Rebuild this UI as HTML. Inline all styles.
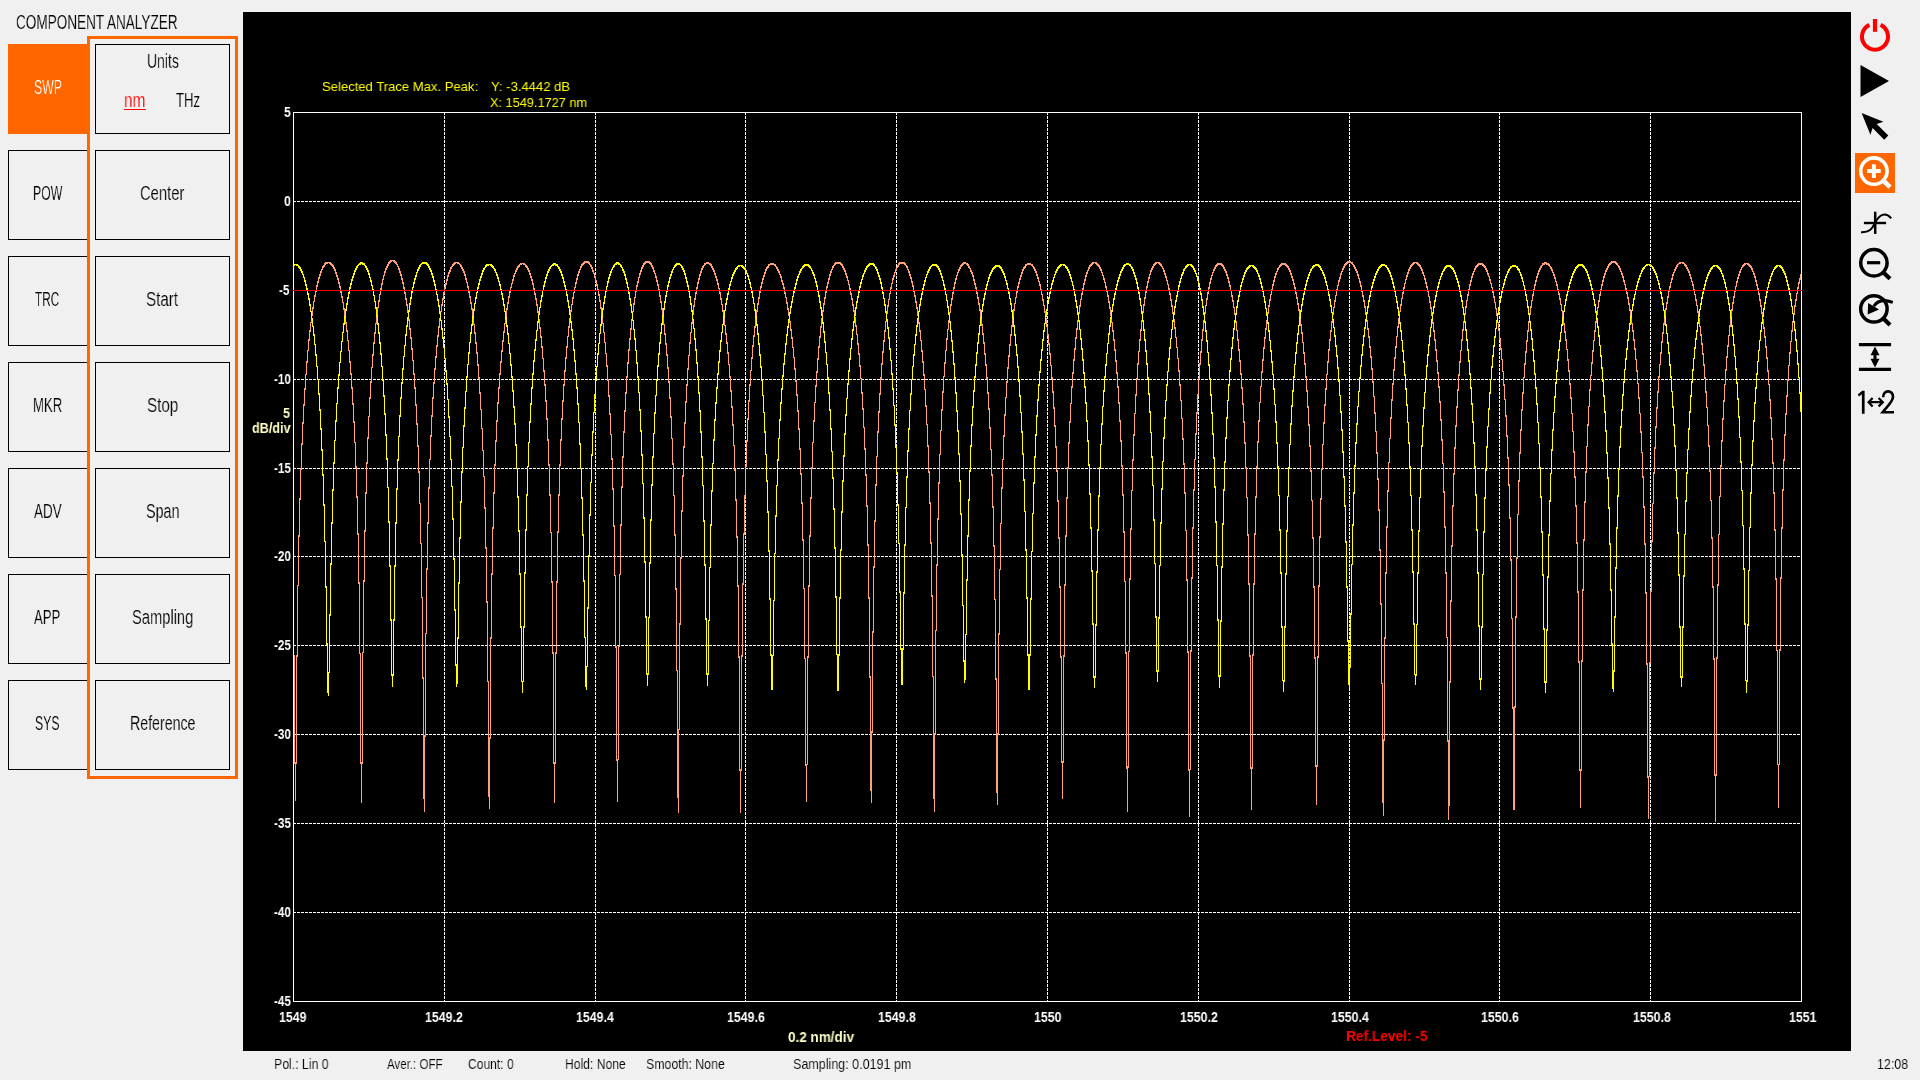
<!DOCTYPE html>
<html><head><meta charset="utf-8"><title>Component Analyzer</title>
<style>
html,body{margin:0;padding:0;}
body{width:1920px;height:1080px;background:#f0f0f0;position:relative;overflow:hidden;font-family:"Liberation Sans",sans-serif;}
.t{position:absolute;white-space:pre;transform-origin:0 0;display:block;will-change:transform;}
.b{position:absolute;box-sizing:border-box;border:1px solid #000;background:#f0f0f0;}
#frame{position:absolute;left:87px;top:36px;width:151px;height:743px;box-sizing:border-box;border:3px solid #ff6600;}
#chart{position:absolute;left:243px;top:12px;}
#icons{position:absolute;left:1851px;top:0;}
</style></head><body>

<span class="t" style="left:16.00px;top:8.74px;font-size:19.5px;line-height:26px;color:#000;transform:scaleX(0.6954);-webkit-text-stroke:0.15px #f0f0f0;">COMPONENT ANALYZER</span>
<div class="b" style="left:8px;top:44px;width:80px;height:90px;background:#ff6600;border-color:#ff6600"></div>
<div class="b" style="left:95px;top:44px;width:135px;height:90px"></div>
<div class="b" style="left:8px;top:150px;width:80px;height:90px"></div>
<div class="b" style="left:95px;top:150px;width:135px;height:90px"></div>
<div class="b" style="left:8px;top:256px;width:80px;height:90px"></div>
<div class="b" style="left:95px;top:256px;width:135px;height:90px"></div>
<div class="b" style="left:8px;top:362px;width:80px;height:90px"></div>
<div class="b" style="left:95px;top:362px;width:135px;height:90px"></div>
<div class="b" style="left:8px;top:468px;width:80px;height:90px"></div>
<div class="b" style="left:95px;top:468px;width:135px;height:90px"></div>
<div class="b" style="left:8px;top:574px;width:80px;height:90px"></div>
<div class="b" style="left:95px;top:574px;width:135px;height:90px"></div>
<div class="b" style="left:8px;top:680px;width:80px;height:90px"></div>
<div class="b" style="left:95px;top:680px;width:135px;height:90px"></div>
<span class="t" style="left:33.55px;top:74.24px;font-size:19.5px;line-height:26px;color:#fff;transform:scaleX(0.6281);-webkit-text-stroke:0.2px #ff6600;">SWP</span>
<span class="t" style="left:32.85px;top:180.24px;font-size:19.5px;line-height:26px;color:#000;transform:scaleX(0.6290);-webkit-text-stroke:0.15px #f0f0f0;">POW</span>
<span class="t" style="left:140.35px;top:180.24px;font-size:19.5px;line-height:26px;color:#000;transform:scaleX(0.7569);-webkit-text-stroke:0.15px #f0f0f0;">Center</span>
<span class="t" style="left:35.40px;top:286.24px;font-size:19.5px;line-height:26px;color:#000;transform:scaleX(0.6038);-webkit-text-stroke:0.15px #f0f0f0;">TRC</span>
<span class="t" style="left:145.80px;top:286.24px;font-size:19.5px;line-height:26px;color:#000;transform:scaleX(0.7770);-webkit-text-stroke:0.15px #f0f0f0;">Start</span>
<span class="t" style="left:32.90px;top:392.24px;font-size:19.5px;line-height:26px;color:#000;transform:scaleX(0.6738);-webkit-text-stroke:0.15px #f0f0f0;">MKR</span>
<span class="t" style="left:146.90px;top:392.24px;font-size:19.5px;line-height:26px;color:#000;transform:scaleX(0.7778);-webkit-text-stroke:0.15px #f0f0f0;">Stop</span>
<span class="t" style="left:33.65px;top:498.24px;font-size:19.5px;line-height:26px;color:#000;transform:scaleX(0.6908);-webkit-text-stroke:0.15px #f0f0f0;">ADV</span>
<span class="t" style="left:145.75px;top:498.24px;font-size:19.5px;line-height:26px;color:#000;transform:scaleX(0.7356);-webkit-text-stroke:0.15px #f0f0f0;">Span</span>
<span class="t" style="left:34.35px;top:604.24px;font-size:19.5px;line-height:26px;color:#000;transform:scaleX(0.6740);-webkit-text-stroke:0.15px #f0f0f0;">APP</span>
<span class="t" style="left:131.85px;top:604.24px;font-size:19.5px;line-height:26px;color:#000;transform:scaleX(0.7540);-webkit-text-stroke:0.15px #f0f0f0;">Sampling</span>
<span class="t" style="left:35.25px;top:710.24px;font-size:19.5px;line-height:26px;color:#000;transform:scaleX(0.6279);-webkit-text-stroke:0.15px #f0f0f0;">SYS</span>
<span class="t" style="left:129.75px;top:710.24px;font-size:19.5px;line-height:26px;color:#000;transform:scaleX(0.7280);-webkit-text-stroke:0.15px #f0f0f0;">Reference</span>
<span class="t" style="left:147.00px;top:47.64px;font-size:19.5px;line-height:26px;color:#000;transform:scaleX(0.7158);-webkit-text-stroke:0.15px #f0f0f0;">Units</span>
<span class="t" style="left:124.00px;top:87.04px;font-size:19.5px;line-height:26px;color:#ff0000;transform:scaleX(0.7937);-webkit-text-stroke:0.15px #f0f0f0;">nm</span>
<div style="position:absolute;left:124px;top:109px;width:22px;height:1px;background:#ff0000"></div>
<span class="t" style="left:176.00px;top:86.84px;font-size:19.5px;line-height:26px;color:#000;transform:scaleX(0.6714);-webkit-text-stroke:0.15px #f0f0f0;">THz</span>
<div id="frame"></div>
<span class="t" style="left:274.30px;top:1053.73px;font-size:15.2px;line-height:20px;color:#000;transform:scaleX(0.8092);-webkit-text-stroke:0.12px #f0f0f0;">Pol.: Lin 0</span>
<span class="t" style="left:386.80px;top:1053.73px;font-size:15.2px;line-height:20px;color:#000;transform:scaleX(0.7609);-webkit-text-stroke:0.12px #f0f0f0;">Aver.: OFF</span>
<span class="t" style="left:468.00px;top:1053.73px;font-size:15.2px;line-height:20px;color:#000;transform:scaleX(0.7953);-webkit-text-stroke:0.12px #f0f0f0;">Count: 0</span>
<span class="t" style="left:564.70px;top:1053.73px;font-size:15.2px;line-height:20px;color:#000;transform:scaleX(0.7995);-webkit-text-stroke:0.12px #f0f0f0;">Hold: None</span>
<span class="t" style="left:646.00px;top:1053.73px;font-size:15.2px;line-height:20px;color:#000;transform:scaleX(0.8110);-webkit-text-stroke:0.12px #f0f0f0;">Smooth: None</span>
<span class="t" style="left:793.00px;top:1053.73px;font-size:15.2px;line-height:20px;color:#000;transform:scaleX(0.8249);-webkit-text-stroke:0.12px #f0f0f0;">Sampling: 0.0191 pm</span>
<span class="t" style="left:1876.80px;top:1053.73px;font-size:15.2px;line-height:20px;color:#000;transform:scaleX(0.8202);-webkit-text-stroke:0.12px #f0f0f0;">12:08</span>
<svg id="chart" width="1608" height="1039" viewBox="243 12 1608 1039" shape-rendering="crispEdges">
<rect x="243" y="12" width="1608" height="1039" fill="#000"/>
<path d="M293 201.5H1802M293 290.5H1802M293 379.5H1802M293 468.5H1802M293 556.5H1802M293 645.5H1802M293 734.5H1802M293 823.5H1802M293 912.5H1802" stroke="#fff" stroke-width="1" stroke-dasharray="3 1" fill="none"/>
<path d="M444.5 112V1002M595.5 112V1002M745.5 112V1002M896.5 112V1002M1047.5 112V1002M1198.5 112V1002M1349.5 112V1002M1499.5 112V1002M1650.5 112V1002" stroke="#fff" stroke-width="1" stroke-dasharray="3 1" fill="none"/>
<path d="M294.5 655V764M295.5 762V801M296.5 655V764M297.5 585V657M298.5 535V586M299.5 498V537M300.5 468V500M301.5 443V470M302.5 422V445M303.5 404V424M304.5 388V406M305.5 374V390M306.5 361V375M307.5 350V363M308.5 339V351M309.5 330V341M310.5 322V332M311.5 314V323M312.5 307V316M313.5 301V309M314.5 295V302M315.5 290V297M316.5 285V292M317.5 281V287M318.5 277V283M319.5 274V279M320.5 271V276M321.5 269V273M322.5 266V270M323.5 265V268M324.5 263V267M325.5 262V265M326.5 262V264M327.5 262V264M328.5 262V263M329.5 262V264M330.5 262V265M331.5 263V266M332.5 264V267M333.5 265V269M334.5 267V271M335.5 269V274M336.5 272V277M337.5 275V280M338.5 278V284M339.5 282V288M340.5 286V293M341.5 291V298M342.5 296V303M343.5 302V310M344.5 308V316M345.5 315V324M346.5 322V332M347.5 330V341M348.5 340V351M349.5 350V363M350.5 361V375M351.5 373V389M352.5 387V405M353.5 403V423M354.5 421V443M355.5 442V468M356.5 466V498M357.5 496V535M358.5 533V584M359.5 582V654M360.5 653V764M361.5 762V803M362.5 652V764M363.5 580V653M364.5 530V582M365.5 492V532M366.5 462V494M367.5 437V464M368.5 416V439M369.5 397V417M370.5 381V399M371.5 367V383M372.5 354V368M373.5 342V356M374.5 332V344M375.5 323V334M376.5 314V324M377.5 307V316M378.5 300V308M379.5 294V302M380.5 288V295M381.5 283V290M382.5 279V285M383.5 275V280M384.5 271V276M385.5 268V273M386.5 266V270M387.5 264V268M388.5 262V266M389.5 261V264M390.5 260V263M391.5 260V262M392.5 260V261M393.5 260V262M394.5 260V263M395.5 261V264M396.5 262V265M397.5 264V267M398.5 266V270M399.5 268V273M400.5 271V276M401.5 274V280M402.5 278V284M403.5 282V289M404.5 287V294M405.5 292V300M406.5 298V306M407.5 304V313M408.5 311V321M409.5 319V330M410.5 328V339M411.5 337V350M412.5 348V361M413.5 360V375M414.5 373V389M415.5 387V406M416.5 404V425M417.5 423V447M418.5 445V473M419.5 471V504M420.5 503V544M421.5 543V598M422.5 597V679M423.5 677V799M424.5 735V812M425.5 633V737M426.5 568V634M427.5 522V570M428.5 487V524M429.5 459V489M430.5 435V460M431.5 415V437M432.5 397V417M433.5 382V399M434.5 368V384M435.5 356V370M436.5 345V358M437.5 335V347M438.5 326V337M439.5 318V328M440.5 311V320M441.5 304V312M442.5 298V306M443.5 292V300M444.5 287V294M445.5 283V289M446.5 279V285M447.5 275V281M448.5 272V277M449.5 270V274M450.5 267V272M451.5 266V269M452.5 264V267M453.5 263V266M454.5 262V265M455.5 262V264M456.5 262V263M457.5 262V264M458.5 262V264M459.5 263V265M460.5 264V267M461.5 265V269M462.5 267V271M463.5 269V273M464.5 271V276M465.5 274V280M466.5 278V283M467.5 282V288M468.5 286V293M469.5 291V298M470.5 296V304M471.5 302V310M472.5 308V317M473.5 316V325M474.5 324V334M475.5 332V344M476.5 342V354M477.5 352V366M478.5 364V379M479.5 377V394M480.5 392V410M481.5 409V429M482.5 428V451M483.5 450V477M484.5 476V509M485.5 507V549M486.5 547V603M487.5 601V682M488.5 681V797M489.5 737V809M490.5 637V739M491.5 573V639M492.5 527V575M493.5 492V529M494.5 464V494M495.5 440V466M496.5 420V442M497.5 402V422M498.5 387V404M499.5 373V389M500.5 361V375M501.5 350V363M502.5 340V352M503.5 331V342M504.5 323V333M505.5 315V324M506.5 308V317M507.5 302V310M508.5 296V304M509.5 291V298M510.5 287V293M511.5 283V288M512.5 279V284M513.5 275V281M514.5 273V277M515.5 270V274M516.5 268V272M517.5 266V270M518.5 265V268M519.5 264V267M520.5 263V265M521.5 263V265M522.5 263V264M523.5 263V265M524.5 263V265M525.5 264V267M526.5 265V268M527.5 266V270M528.5 268V272M529.5 270V275M530.5 273V278M531.5 276V281M532.5 279V285M533.5 283V290M534.5 288V295M535.5 293V300M536.5 298V306M537.5 304V313M538.5 311V321M539.5 319V329M540.5 327V338M541.5 336V348M542.5 346V359M543.5 358V372M544.5 370V386M545.5 384V402M546.5 400V420M547.5 418V441M548.5 439V466M549.5 464V496M550.5 494V533M551.5 532V583M552.5 581V654M553.5 652V764M554.5 762V803M555.5 652V764M556.5 581V654M557.5 531V583M558.5 494V533M559.5 464V496M560.5 439V466M561.5 418V441M562.5 400V420M563.5 384V402M564.5 370V386M565.5 357V372M566.5 346V359M567.5 336V348M568.5 326V337M569.5 318V328M570.5 310V320M571.5 304V312M572.5 297V305M573.5 292V299M574.5 287V293M575.5 282V288M576.5 278V284M577.5 274V280M578.5 271V276M579.5 269V273M580.5 266V270M581.5 264V268M582.5 263V266M583.5 262V265M584.5 261V264M585.5 261V263M586.5 261V263M587.5 261V263M588.5 261V264M589.5 262V265M590.5 264V267M591.5 265V269M592.5 267V272M593.5 270V274M594.5 273V278M595.5 276V282M596.5 280V286M597.5 284V291M598.5 289V296M599.5 294V302M600.5 300V309M601.5 307V316M602.5 314V324M603.5 323V333M604.5 332V343M605.5 342V354M606.5 353V367M607.5 365V381M608.5 379V397M609.5 395V415M610.5 413V435M611.5 434V460M612.5 458V490M613.5 488V527M614.5 525V576M615.5 575V648M616.5 646V761M617.5 759V802M618.5 646V760M619.5 574V647M620.5 524V575M621.5 486V526M622.5 456V488M623.5 431V458M624.5 410V433M625.5 392V412M626.5 376V394M627.5 362V378M628.5 349V364M629.5 338V351M630.5 328V340M631.5 319V330M632.5 311V321M633.5 303V312M634.5 297V305M635.5 291V298M636.5 285V292M637.5 281V287M638.5 277V283M639.5 273V278M640.5 270V275M641.5 267V272M642.5 265V269M643.5 263V267M644.5 262V265M645.5 261V264M646.5 261V263M647.5 261V263M648.5 261V263M649.5 261V264M650.5 262V265M651.5 263V267M652.5 265V269M653.5 267V272M654.5 270V274M655.5 273V278M656.5 276V282M657.5 280V286M658.5 284V291M659.5 289V297M660.5 295V303M661.5 301V310M662.5 308V317M663.5 315V325M664.5 324V335M665.5 333V345M666.5 343V356M667.5 354V369M668.5 367V383M669.5 381V399M670.5 397V418M671.5 416V439M672.5 438V465M673.5 463V496M674.5 495V536M675.5 534V590M676.5 588V671M677.5 670V798M678.5 729V813M679.5 623V730M680.5 557V625M681.5 510V559M682.5 475V512M683.5 446V477M684.5 422V448M685.5 401V424M686.5 384V403M687.5 368V386M688.5 355V370M689.5 342V356M690.5 332V344M691.5 322V333M692.5 313V324M693.5 305V315M694.5 298V307M695.5 292V300M696.5 287V294M697.5 282V289M698.5 278V284M699.5 274V280M700.5 271V276M701.5 268V273M702.5 266V270M703.5 265V268M704.5 263V266M705.5 263V265M706.5 262V264M707.5 262V264M708.5 262V264M709.5 263V265M710.5 263V266M711.5 264V268M712.5 266V270M713.5 268V272M714.5 270V275M715.5 273V278M716.5 276V281M717.5 279V285M718.5 283V289M719.5 288V294M720.5 292V300M721.5 298V305M722.5 304V312M723.5 310V319M724.5 317V326M725.5 325V335M726.5 333V344M727.5 342V354M728.5 352V365M729.5 364V378M730.5 376V392M731.5 390V408M732.5 406V426M733.5 424V446M734.5 445V471M735.5 469V501M736.5 499V538M737.5 536V587M738.5 585V658M739.5 656V771M740.5 769V813M741.5 655V771M742.5 583V657M743.5 533V585M744.5 495V535M745.5 465V497M746.5 440V467M747.5 418V442M748.5 400V420M749.5 384V402M750.5 370V386M751.5 357V371M752.5 345V359M753.5 335V347M754.5 326V337M755.5 317V328M756.5 310V319M757.5 303V312M758.5 297V305M759.5 291V299M760.5 286V293M761.5 282V288M762.5 278V284M763.5 275V280M764.5 272V277M765.5 269V274M766.5 267V271M767.5 266V269M768.5 264V268M769.5 264V266M770.5 263V265M771.5 263V265M772.5 263V265M773.5 263V265M774.5 264V266M775.5 264V267M776.5 266V269M777.5 267V271M778.5 269V273M779.5 271V275M780.5 274V278M781.5 276V282M782.5 280V285M783.5 283V289M784.5 287V294M785.5 292V298M786.5 297V304M787.5 302V310M788.5 308V316M789.5 314V323M790.5 321V331M791.5 329V339M792.5 337V348M793.5 347V358M794.5 357V370M795.5 368V382M796.5 380V396M797.5 394V412M798.5 410V430M799.5 428V450M800.5 448V475M801.5 473V504M802.5 502V541M803.5 539V589M804.5 588V659M805.5 658V766M806.5 764V802M807.5 656V765M808.5 585V658M809.5 535V587M810.5 497V537M811.5 467V499M812.5 442V469M813.5 420V443M814.5 402V422M815.5 385V403M816.5 371V387M817.5 358V373M818.5 346V360M819.5 336V348M820.5 326V338M821.5 318V328M822.5 310V320M823.5 303V312M824.5 297V305M825.5 291V299M826.5 286V293M827.5 282V288M828.5 278V284M829.5 274V280M830.5 271V276M831.5 269V273M832.5 266V270M833.5 265V268M834.5 263V266M835.5 262V265M836.5 262V264M837.5 262V264M838.5 262V264M839.5 262V264M840.5 262V265M841.5 263V266M842.5 264V268M843.5 266V270M844.5 268V272M845.5 270V275M846.5 273V278M847.5 276V281M848.5 280V285M849.5 284V290M850.5 288V295M851.5 293V300M852.5 298V306M853.5 304V312M854.5 310V319M855.5 317V327M856.5 325V335M857.5 334V345M858.5 343V355M859.5 353V367M860.5 365V379M861.5 378V394M862.5 392V410M863.5 408V428M864.5 427V450M865.5 448V476M866.5 474V507M867.5 505V546M868.5 544V599M869.5 597V678M870.5 676V791M871.5 731V803M872.5 631V733M873.5 566V633M874.5 520V568M875.5 484V522M876.5 456V486M877.5 431V457M878.5 411V433M879.5 393V413M880.5 377V395M881.5 363V379M882.5 351V365M883.5 340V353M884.5 330V342M885.5 321V332M886.5 313V322M887.5 305V314M888.5 299V307M889.5 293V300M890.5 287V294M891.5 283V289M892.5 278V284M893.5 275V280M894.5 272V277M895.5 269V273M896.5 267V271M897.5 265V268M898.5 263V267M899.5 262V265M900.5 262V264M901.5 262V264M902.5 262V264M903.5 262V264M904.5 262V265M905.5 263V266M906.5 265V268M907.5 266V270M908.5 269V273M909.5 271V276M910.5 274V279M911.5 277V283M912.5 281V287M913.5 285V292M914.5 290V297M915.5 295V303M916.5 301V309M917.5 307V316M918.5 314V324M919.5 322V332M920.5 330V341M921.5 340V352M922.5 350V363M923.5 361V376M924.5 374V390M925.5 389V407M926.5 405V425M927.5 424V447M928.5 445V473M929.5 471V504M930.5 502V544M931.5 542V597M932.5 595V677M933.5 676V799M934.5 733V812M935.5 630V735M936.5 564V631M937.5 518V566M938.5 482V520M939.5 454V484M940.5 430V455M941.5 409V431M942.5 391V411M943.5 376V393M944.5 362V377M945.5 350V364M946.5 338V351M947.5 329V340M948.5 320V330M949.5 312V321M950.5 304V313M951.5 298V306M952.5 292V300M953.5 287V294M954.5 282V289M955.5 278V284M956.5 275V280M957.5 272V276M958.5 269V273M959.5 267V271M960.5 265V269M961.5 264V267M962.5 263V266M963.5 262V265M964.5 262V264M965.5 262V264M966.5 263V265M967.5 263V266M968.5 264V268M969.5 266V269M970.5 268V272M971.5 270V274M972.5 272V277M973.5 275V281M974.5 279V285M975.5 283V289M976.5 287V294M977.5 292V299M978.5 297V305M979.5 303V311M980.5 309V318M981.5 317V326M982.5 324V335M983.5 333V344M984.5 342V355M985.5 353V366M986.5 364V379M987.5 377V394M988.5 392V410M989.5 408V429M990.5 427V450M991.5 449V476M992.5 474V508M993.5 506V547M994.5 545V600M995.5 599V680M996.5 678V793M997.5 733V805M998.5 633V735M999.5 569V635M1000.5 523V570M1001.5 487V524M1002.5 459V489M1003.5 435V460M1004.5 414V437M1005.5 397V416M1006.5 381V398M1007.5 367V383M1008.5 355V369M1009.5 344V357M1010.5 334V346M1011.5 325V336M1012.5 317V327M1013.5 309V318M1014.5 303V311M1015.5 297V304M1016.5 291V298M1017.5 286V293M1018.5 282V288M1019.5 278V284M1020.5 275V280M1021.5 272V277M1022.5 269V274M1023.5 267V271M1024.5 266V269M1025.5 264V268M1026.5 264V266M1027.5 263V265M1028.5 263V265M1029.5 263V265M1030.5 263V265M1031.5 264V266M1032.5 264V267M1033.5 266V269M1034.5 267V271M1035.5 269V273M1036.5 271V276M1037.5 274V279M1038.5 277V282M1039.5 281V286M1040.5 284V291M1041.5 289V295M1042.5 294V301M1043.5 299V306M1044.5 305V313M1045.5 311V320M1046.5 318V327M1047.5 326V336M1048.5 334V345M1049.5 343V355M1050.5 353V366M1051.5 365V379M1052.5 377V393M1053.5 391V409M1054.5 407V427M1055.5 425V448M1056.5 446V472M1057.5 470V502M1058.5 500V539M1059.5 537V588M1060.5 586V658M1061.5 656V763M1062.5 761V799M1063.5 655V763M1064.5 584V657M1065.5 535V586M1066.5 497V537M1067.5 467V499M1068.5 442V469M1069.5 421V444M1070.5 403V423M1071.5 386V404M1072.5 372V388M1073.5 359V374M1074.5 348V361M1075.5 337V350M1076.5 328V339M1077.5 320V330M1078.5 312V321M1079.5 305V314M1080.5 299V307M1081.5 293V300M1082.5 288V295M1083.5 283V290M1084.5 279V285M1085.5 275V281M1086.5 272V277M1087.5 270V274M1088.5 267V271M1089.5 265V269M1090.5 264V267M1091.5 263V266M1092.5 262V265M1093.5 262V264M1094.5 262V263M1095.5 262V264M1096.5 262V265M1097.5 263V266M1098.5 264V267M1099.5 265V269M1100.5 267V271M1101.5 269V273M1102.5 272V276M1103.5 275V280M1104.5 278V283M1105.5 282V288M1106.5 286V292M1107.5 290V297M1108.5 295V303M1109.5 301V309M1110.5 307V316M1111.5 314V323M1112.5 322V332M1113.5 330V341M1114.5 339V351M1115.5 349V362M1116.5 360V374M1117.5 372V388M1118.5 386V404M1119.5 402V422M1120.5 420V442M1121.5 440V467M1122.5 465V496M1123.5 494V533M1124.5 531V582M1125.5 581V654M1126.5 652V769M1127.5 766V812M1128.5 651V768M1129.5 578V652M1130.5 528V580M1131.5 490V530M1132.5 459V491M1133.5 434V461M1134.5 413V436M1135.5 394V414M1136.5 378V396M1137.5 363V380M1138.5 351V365M1139.5 339V352M1140.5 329V341M1141.5 320V331M1142.5 311V322M1143.5 304V313M1144.5 297V306M1145.5 291V299M1146.5 286V293M1147.5 281V288M1148.5 277V283M1149.5 274V279M1150.5 270V275M1151.5 268V272M1152.5 266V270M1153.5 264V268M1154.5 263V266M1155.5 262V265M1156.5 262V264M1157.5 262V263M1158.5 262V264M1159.5 262V265M1160.5 263V266M1161.5 264V267M1162.5 266V269M1163.5 268V272M1164.5 270V275M1165.5 273V278M1166.5 276V281M1167.5 280V285M1168.5 284V290M1169.5 288V295M1170.5 293V301M1171.5 299V307M1172.5 305V314M1173.5 312V321M1174.5 319V329M1175.5 327V338M1176.5 337V348M1177.5 347V359M1178.5 358V372M1179.5 370V386M1180.5 384V401M1181.5 400V419M1182.5 418V440M1183.5 438V465M1184.5 463V494M1185.5 492V531M1186.5 530V581M1187.5 579V653M1188.5 651V771M1189.5 769V817M1190.5 650V770M1191.5 577V652M1192.5 527V579M1193.5 489V529M1194.5 459V491M1195.5 433V460M1196.5 412V435M1197.5 394V414M1198.5 378V396M1199.5 363V379M1200.5 351V365M1201.5 339V353M1202.5 329V341M1203.5 320V331M1204.5 312V322M1205.5 305V314M1206.5 298V306M1207.5 292V300M1208.5 287V294M1209.5 282V289M1210.5 278V284M1211.5 275V280M1212.5 272V276M1213.5 269V273M1214.5 267V271M1215.5 265V269M1216.5 264V267M1217.5 263V266M1218.5 263V265M1219.5 263V265M1220.5 263V265M1221.5 263V266M1222.5 264V267M1223.5 265V269M1224.5 267V271M1225.5 269V273M1226.5 271V276M1227.5 274V279M1228.5 277V283M1229.5 281V287M1230.5 285V291M1231.5 290V297M1232.5 295V302M1233.5 300V308M1234.5 307V315M1235.5 314V323M1236.5 321V331M1237.5 330V341M1238.5 339V351M1239.5 349V362M1240.5 360V375M1241.5 373V389M1242.5 387V405M1243.5 403V423M1244.5 421V444M1245.5 442V469M1246.5 467V498M1247.5 497V536M1248.5 534V585M1249.5 583V657M1250.5 655V769M1251.5 767V810M1252.5 654V769M1253.5 583V656M1254.5 533V585M1255.5 496V535M1256.5 466V498M1257.5 441V468M1258.5 420V443M1259.5 402V422M1260.5 386V403M1261.5 371V387M1262.5 359V373M1263.5 347V361M1264.5 337V349M1265.5 328V339M1266.5 320V330M1267.5 312V322M1268.5 305V314M1269.5 299V307M1270.5 294V301M1271.5 289V295M1272.5 284V290M1273.5 280V286M1274.5 276V282M1275.5 273V278M1276.5 271V275M1277.5 268V272M1278.5 267V270M1279.5 265V268M1280.5 264V267M1281.5 263V266M1282.5 263V265M1283.5 263V265M1284.5 263V265M1285.5 263V266M1286.5 264V267M1287.5 265V268M1288.5 266V270M1289.5 268V272M1290.5 270V275M1291.5 273V278M1292.5 276V281M1293.5 279V285M1294.5 283V289M1295.5 287V294M1296.5 292V299M1297.5 297V305M1298.5 303V311M1299.5 309V318M1300.5 316V326M1301.5 324V334M1302.5 332V343M1303.5 342V354M1304.5 352V365M1305.5 363V378M1306.5 376V392M1307.5 390V408M1308.5 406V426M1309.5 424V447M1310.5 445V472M1311.5 470V501M1312.5 500V539M1313.5 537V588M1314.5 586V659M1315.5 657V767M1316.5 765V805M1317.5 656V767M1318.5 585V658M1319.5 536V587M1320.5 498V538M1321.5 468V500M1322.5 444V470M1323.5 422V445M1324.5 404V424M1325.5 388V406M1326.5 374V390M1327.5 361V375M1328.5 349V363M1329.5 339V351M1330.5 330V341M1331.5 321V332M1332.5 314V323M1333.5 307V315M1334.5 300V308M1335.5 295V302M1336.5 289V296M1337.5 285V291M1338.5 280V286M1339.5 277V282M1340.5 273V279M1341.5 271V275M1342.5 268V272M1343.5 266V270M1344.5 264V268M1345.5 263V266M1346.5 262V265M1347.5 261V264M1348.5 261V263M1349.5 261V263M1350.5 261V263M1351.5 262V264M1352.5 262V265M1353.5 264V267M1354.5 265V269M1355.5 267V271M1356.5 269V273M1357.5 271V276M1358.5 274V279M1359.5 278V283M1360.5 281V287M1361.5 285V292M1362.5 290V297M1363.5 295V302M1364.5 300V308M1365.5 306V315M1366.5 313V322M1367.5 320V330M1368.5 328V338M1369.5 336V348M1370.5 346V358M1371.5 356V370M1372.5 368V383M1373.5 381V397M1374.5 396V414M1375.5 412V432M1376.5 431V454M1377.5 452V480M1378.5 478V511M1379.5 509V551M1380.5 549V605M1381.5 603V684M1382.5 683V803M1383.5 739V816M1384.5 637V741M1385.5 572V639M1386.5 526V574M1387.5 490V528M1388.5 462V492M1389.5 438V463M1390.5 417V439M1391.5 399V419M1392.5 383V401M1393.5 369V385M1394.5 357V371M1395.5 346V359M1396.5 336V348M1397.5 326V337M1398.5 318V328M1399.5 311V320M1400.5 304V312M1401.5 298V306M1402.5 292V299M1403.5 287V294M1404.5 283V289M1405.5 279V284M1406.5 275V280M1407.5 272V277M1408.5 269V274M1409.5 267V271M1410.5 265V269M1411.5 264V267M1412.5 263V266M1413.5 262V265M1414.5 262V264M1415.5 262V263M1416.5 262V264M1417.5 262V265M1418.5 263V266M1419.5 264V267M1420.5 265V269M1421.5 267V271M1422.5 269V274M1423.5 272V276M1424.5 275V280M1425.5 278V284M1426.5 282V288M1427.5 286V292M1428.5 291V297M1429.5 296V303M1430.5 301V309M1431.5 307V316M1432.5 314V324M1433.5 322V332M1434.5 330V341M1435.5 339V351M1436.5 349V362M1437.5 360V374M1438.5 372V388M1439.5 386V403M1440.5 401V421M1441.5 419V441M1442.5 439V464M1443.5 463V493M1444.5 491V528M1445.5 526V574M1446.5 572V638M1447.5 637V742M1448.5 740V820M1449.5 681V806M1450.5 600V683M1451.5 545V602M1452.5 505V547M1453.5 473V507M1454.5 447V475M1455.5 425V449M1456.5 406V427M1457.5 389V408M1458.5 374V391M1459.5 361V376M1460.5 350V363M1461.5 339V351M1462.5 329V341M1463.5 321V331M1464.5 313V323M1465.5 306V315M1466.5 300V308M1467.5 294V301M1468.5 289V296M1469.5 284V291M1470.5 280V286M1471.5 276V282M1472.5 273V278M1473.5 271V275M1474.5 268V272M1475.5 266V270M1476.5 265V268M1477.5 264V267M1478.5 263V266M1479.5 263V265M1480.5 263V265M1481.5 263V265M1482.5 263V266M1483.5 264V267M1484.5 265V268M1485.5 266V270M1486.5 268V272M1487.5 270V275M1488.5 273V277M1489.5 276V281M1490.5 279V284M1491.5 283V288M1492.5 287V293M1493.5 291V298M1494.5 296V303M1495.5 302V309M1496.5 308V316M1497.5 314V323M1498.5 322V331M1499.5 330V340M1500.5 338V350M1501.5 348V360M1502.5 359V372M1503.5 371V386M1504.5 384V400M1505.5 399V417M1506.5 415V437M1507.5 435V459M1508.5 457V486M1509.5 484V519M1510.5 517V561M1511.5 559V619M1512.5 618V709M1513.5 707V810M1514.5 706V810M1515.5 616V708M1516.5 557V618M1517.5 514V559M1518.5 480V515M1519.5 452V482M1520.5 429V454M1521.5 409V431M1522.5 392V411M1523.5 377V394M1524.5 363V378M1525.5 351V365M1526.5 340V353M1527.5 330V342M1528.5 321V332M1529.5 313V323M1530.5 306V315M1531.5 300V308M1532.5 294V301M1533.5 289V296M1534.5 284V290M1535.5 280V286M1536.5 276V282M1537.5 273V278M1538.5 270V275M1539.5 268V272M1540.5 266V270M1541.5 265V268M1542.5 263V266M1543.5 263V265M1544.5 262V265M1545.5 262V264M1546.5 262V265M1547.5 263V265M1548.5 263V266M1549.5 264V267M1550.5 266V269M1551.5 267V271M1552.5 269V273M1553.5 272V276M1554.5 274V279M1555.5 277V282M1556.5 281V286M1557.5 284V290M1558.5 289V295M1559.5 293V300M1560.5 298V305M1561.5 304V311M1562.5 310V318M1563.5 316V325M1564.5 323V333M1565.5 331V341M1566.5 339V350M1567.5 349V361M1568.5 359V372M1569.5 370V385M1570.5 383V399M1571.5 397V414M1572.5 413V432M1573.5 431V453M1574.5 451V478M1575.5 476V507M1576.5 505V544M1577.5 542V593M1578.5 591V663M1579.5 661V771M1580.5 769V808M1581.5 660V771M1582.5 589V662M1583.5 539V591M1584.5 501V541M1585.5 471V503M1586.5 446V473M1587.5 424V447M1588.5 406V426M1589.5 389V407M1590.5 375V391M1591.5 362V376M1592.5 350V364M1593.5 340V352M1594.5 330V341M1595.5 321V332M1596.5 314V323M1597.5 307V315M1598.5 300V308M1599.5 294V302M1600.5 289V296M1601.5 284V291M1602.5 280V286M1603.5 276V282M1604.5 273V278M1605.5 270V275M1606.5 268V272M1607.5 266V270M1608.5 264V268M1609.5 263V266M1610.5 262V265M1611.5 261V264M1612.5 261V263M1613.5 261V263M1614.5 261V263M1615.5 261V264M1616.5 262V265M1617.5 263V266M1618.5 265V268M1619.5 266V270M1620.5 268V272M1621.5 271V275M1622.5 273V278M1623.5 276V282M1624.5 280V285M1625.5 284V290M1626.5 288V294M1627.5 292V299M1628.5 297V305M1629.5 303V311M1630.5 309V317M1631.5 315V324M1632.5 323V332M1633.5 330V341M1634.5 339V350M1635.5 348V360M1636.5 359V372M1637.5 370V384M1638.5 383V399M1639.5 397V414M1640.5 413V433M1641.5 431V453M1642.5 452V478M1643.5 476V508M1644.5 506V545M1645.5 543V594M1646.5 592V665M1647.5 663V778M1648.5 776V819M1649.5 662V777M1650.5 590V664M1651.5 540V592M1652.5 503V542M1653.5 472V504M1654.5 447V474M1655.5 426V449M1656.5 407V428M1657.5 391V409M1658.5 376V393M1659.5 364V378M1660.5 352V365M1661.5 341V354M1662.5 332V343M1663.5 323V334M1664.5 315V325M1665.5 308V317M1666.5 302V310M1667.5 296V304M1668.5 291V298M1669.5 286V292M1670.5 282V288M1671.5 278V283M1672.5 274V280M1673.5 272V276M1674.5 269V273M1675.5 267V271M1676.5 265V269M1677.5 264V267M1678.5 263V265M1679.5 262V264M1680.5 262V264M1681.5 262V263M1682.5 262V264M1683.5 262V264M1684.5 263V266M1685.5 264V267M1686.5 265V269M1687.5 267V271M1688.5 269V273M1689.5 271V276M1690.5 274V279M1691.5 277V282M1692.5 281V286M1693.5 284V291M1694.5 289V295M1695.5 294V301M1696.5 299V306M1697.5 305V313M1698.5 311V320M1699.5 318V327M1700.5 326V336M1701.5 334V345M1702.5 343V355M1703.5 353V366M1704.5 364V379M1705.5 377V393M1706.5 391V408M1707.5 407V426M1708.5 425V447M1709.5 445V472M1710.5 470V501M1711.5 500V539M1712.5 537V588M1713.5 586V660M1714.5 658V776M1715.5 774V822M1716.5 657V776M1717.5 584V659M1718.5 534V586M1719.5 496V535M1720.5 465V497M1721.5 440V467M1722.5 418V442M1723.5 400V420M1724.5 384V402M1725.5 369V385M1726.5 356V371M1727.5 345V358M1728.5 335V347M1729.5 325V336M1730.5 317V327M1731.5 309V319M1732.5 302V311M1733.5 296V304M1734.5 291V298M1735.5 286V292M1736.5 281V287M1737.5 277V283M1738.5 274V279M1739.5 271V276M1740.5 269V273M1741.5 267V270M1742.5 265V268M1743.5 264V267M1744.5 263V266M1745.5 263V265M1746.5 263V264M1747.5 263V265M1748.5 263V266M1749.5 264V267M1750.5 265V268M1751.5 266V270M1752.5 268V272M1753.5 271V275M1754.5 273V278M1755.5 276V282M1756.5 280V286M1757.5 284V290M1758.5 288V295M1759.5 293V301M1760.5 299V307M1761.5 305V314M1762.5 312V321M1763.5 319V329M1764.5 327V338M1765.5 336V348M1766.5 346V359M1767.5 357V372M1768.5 370V385M1769.5 384V401M1770.5 399V419M1771.5 417V440M1772.5 438V464M1773.5 462V494M1774.5 492V531M1775.5 529V580M1776.5 578V651M1777.5 650V765M1778.5 764V808M1779.5 649V765M1780.5 577V651M1781.5 527V579M1782.5 489V529M1783.5 459V491M1784.5 434V461M1785.5 413V436M1786.5 395V415M1787.5 379V397M1788.5 365V381M1789.5 352V366M1790.5 341V354M1791.5 330V342M1792.5 321V332M1793.5 313V323M1794.5 305V315M1795.5 299V307M1796.5 293V301M1797.5 287V294M1798.5 282V289M1799.5 278V284M1800.5 274V280M1801.5 271V276" stroke="#ffa07a" stroke-width="1" fill="none"/>
<path d="M294.5 264V266M295.5 264V265M296.5 264V266M297.5 264V266M298.5 265V268M299.5 266V269M300.5 267V271M301.5 269V273M302.5 271V275M303.5 274V278M304.5 277V282M305.5 280V286M306.5 284V290M307.5 288V295M308.5 293V300M309.5 298V306M310.5 304V312M311.5 311V319M312.5 318V327M313.5 326V336M314.5 334V345M315.5 344V356M316.5 354V367M317.5 366V380M318.5 379V395M319.5 393V411M320.5 409V430M321.5 428V451M322.5 449V476M323.5 474V506M324.5 504V542M325.5 541V588M326.5 586V645M327.5 643V693M328.5 672V696M329.5 614V673M330.5 563V616M331.5 522V565M332.5 489V524M333.5 462V491M334.5 440V464M335.5 420V441M336.5 403V422M337.5 387V404M338.5 374V389M339.5 362V376M340.5 351V363M341.5 341V352M342.5 332V342M343.5 323V333M344.5 316V325M345.5 309V318M346.5 303V311M347.5 297V305M348.5 292V299M349.5 287V294M350.5 283V289M351.5 279V285M352.5 276V281M353.5 273V278M354.5 270V275M355.5 268V272M356.5 266V270M357.5 265V268M358.5 264V266M359.5 263V265M360.5 262V265M361.5 262V264M362.5 262V265M363.5 263V265M364.5 263V266M365.5 265V268M366.5 266V270M367.5 268V272M368.5 270V275M369.5 273V278M370.5 277V282M371.5 280V286M372.5 285V291M373.5 289V296M374.5 295V302M375.5 301V309M376.5 307V317M377.5 315V325M378.5 323V334M379.5 332V344M380.5 342V355M381.5 353V367M382.5 366V381M383.5 380V397M384.5 395V415M385.5 413V436M386.5 434V460M387.5 458V488M388.5 487V523M389.5 521V567M390.5 565V621M391.5 619V676M392.5 674V687M393.5 619V676M394.5 565V621M395.5 522V567M396.5 488V524M397.5 459V490M398.5 436V461M399.5 415V437M400.5 397V417M401.5 382V399M402.5 368V384M403.5 356V370M404.5 345V357M405.5 334V346M406.5 325V336M407.5 317V327M408.5 310V319M409.5 303V312M410.5 297V305M411.5 291V299M412.5 287V293M413.5 282V288M414.5 278V284M415.5 275V280M416.5 272V277M417.5 269V273M418.5 267V271M419.5 265V269M420.5 264V267M421.5 263V265M422.5 262V264M423.5 262V264M424.5 262V264M425.5 262V264M426.5 262V265M427.5 263V266M428.5 264V268M429.5 266V270M430.5 268V272M431.5 270V275M432.5 273V278M433.5 276V282M434.5 280V286M435.5 284V290M436.5 289V295M437.5 294V301M438.5 299V307M439.5 305V314M440.5 312V321M441.5 320V330M442.5 328V339M443.5 337V348M444.5 347V359M445.5 358V372M446.5 370V385M447.5 383V400M448.5 399V418M449.5 416V437M450.5 436V460M451.5 459V487M452.5 486V520M453.5 518V560M454.5 558V611M455.5 609V666M456.5 664V687M457.5 637V684M458.5 582V639M459.5 537V584M460.5 501V539M461.5 471V503M462.5 447V473M463.5 425V448M464.5 407V427M465.5 391V409M466.5 376V392M467.5 364V378M468.5 352V365M469.5 342V354M470.5 332V343M471.5 324V334M472.5 316V326M473.5 309V318M474.5 303V311M475.5 297V304M476.5 292V299M477.5 287V293M478.5 283V289M479.5 279V285M480.5 276V281M481.5 273V278M482.5 270V275M483.5 268V272M484.5 267V270M485.5 265V268M486.5 264V267M487.5 264V266M488.5 264V266M489.5 264V265M490.5 264V266M491.5 264V267M492.5 265V268M493.5 266V269M494.5 268V271M495.5 269V273M496.5 272V276M497.5 274V279M498.5 277V282M499.5 281V286M500.5 284V290M501.5 289V295M502.5 293V300M503.5 298V306M504.5 304V312M505.5 311V319M506.5 317V327M507.5 325V335M508.5 333V344M509.5 343V354M510.5 353V366M511.5 364V378M512.5 376V392M513.5 390V408M514.5 406V425M515.5 423V446M516.5 444V469M517.5 468V498M518.5 496V532M519.5 530V575M520.5 573V628M521.5 626V682M522.5 681V693M523.5 626V682M524.5 572V628M525.5 529V574M526.5 494V531M527.5 466V496M528.5 442V467M529.5 421V443M530.5 403V423M531.5 387V405M532.5 373V389M533.5 360V375M534.5 349V362M535.5 339V351M536.5 330V341M537.5 321V331M538.5 314V323M539.5 307V315M540.5 300V308M541.5 295V302M542.5 290V297M543.5 285V291M544.5 281V287M545.5 277V283M546.5 274V279M547.5 271V276M548.5 269V273M549.5 267V271M550.5 266V269M551.5 265V267M552.5 264V266M553.5 263V266M554.5 263V265M555.5 263V266M556.5 264V266M557.5 264V267M558.5 266V269M559.5 267V271M560.5 269V273M561.5 271V276M562.5 274V279M563.5 277V283M564.5 281V287M565.5 285V291M566.5 289V296M567.5 294V302M568.5 300V308M569.5 306V315M570.5 313V323M571.5 321V331M572.5 329V340M573.5 338V351M574.5 349V362M575.5 360V375M576.5 373V389M577.5 387V405M578.5 403V423M579.5 422V445M580.5 443V469M581.5 468V499M582.5 497V536M583.5 534V582M584.5 580V638M585.5 637V687M586.5 666V690M587.5 607V667M588.5 555V609M589.5 514V557M590.5 482V516M591.5 454V483M592.5 431V456M593.5 412V433M594.5 394V413M595.5 379V396M596.5 366V381M597.5 353V367M598.5 343V355M599.5 333V344M600.5 324V334M601.5 316V326M602.5 308V318M603.5 302V310M604.5 296V304M605.5 290V298M606.5 286V292M607.5 281V287M608.5 277V283M609.5 274V279M610.5 271V276M611.5 269V273M612.5 267V270M613.5 265V268M614.5 264V267M615.5 263V265M616.5 262V265M617.5 262V264M618.5 262V265M619.5 263V265M620.5 264V267M621.5 265V268M622.5 267V271M623.5 269V273M624.5 271V276M625.5 274V280M626.5 278V284M627.5 282V288M628.5 287V294M629.5 292V300M630.5 298V306M631.5 304V313M632.5 312V321M633.5 320V330M634.5 329V340M635.5 338V351M636.5 350V364M637.5 362V378M638.5 376V393M639.5 392V411M640.5 409V432M641.5 430V456M642.5 454V484M643.5 483V519M644.5 517V563M645.5 561V618M646.5 616V675M647.5 673V686M648.5 617V675M649.5 562V618M650.5 519V564M651.5 484V521M652.5 456V486M653.5 433V458M654.5 412V434M655.5 395V414M656.5 379V396M657.5 365V381M658.5 353V367M659.5 342V355M660.5 332V344M661.5 323V334M662.5 315V325M663.5 308V317M664.5 301V310M665.5 295V303M666.5 290V297M667.5 285V292M668.5 281V287M669.5 277V283M670.5 274V279M671.5 271V276M672.5 269V273M673.5 267V270M674.5 265V268M675.5 264V267M676.5 263V266M677.5 263V265M678.5 263V265M679.5 263V265M680.5 264V266M681.5 265V268M682.5 266V270M683.5 268V272M684.5 270V275M685.5 273V279M686.5 277V283M687.5 281V287M688.5 285V292M689.5 291V298M690.5 296V305M691.5 303V312M692.5 310V320M693.5 319V329M694.5 328V340M695.5 338V351M696.5 349V364M697.5 362V378M698.5 376V394M699.5 392V412M700.5 410V433M701.5 431V458M702.5 456V486M703.5 485V522M704.5 520V566M705.5 564V620M706.5 618V675M707.5 673V686M708.5 620V675M709.5 567V621M710.5 524V568M711.5 490V526M712.5 463V492M713.5 439V464M714.5 419V441M715.5 402V421M716.5 387V404M717.5 373V389M718.5 361V375M719.5 350V363M720.5 340V352M721.5 332V342M722.5 324V333M723.5 316V325M724.5 310V318M725.5 303V311M726.5 298V305M727.5 293V300M728.5 288V295M729.5 284V290M730.5 281V286M731.5 277V282M732.5 274V279M733.5 272V276M734.5 270V274M735.5 268V272M736.5 267V270M737.5 266V269M738.5 265V267M739.5 265V267M740.5 265V266M741.5 265V267M742.5 265V268M743.5 266V269M744.5 267V270M745.5 268V272M746.5 270V274M747.5 273V277M748.5 275V280M749.5 279V284M750.5 282V288M751.5 287V293M752.5 291V298M753.5 297V304M754.5 303V311M755.5 309V318M756.5 316V326M757.5 324V335M758.5 333V345M759.5 343V356M760.5 354V368M761.5 366V381M762.5 380V396M763.5 395V413M764.5 412V433M765.5 431V455M766.5 454V482M767.5 480V513M768.5 511V552M769.5 550V600M770.5 598V656M771.5 654V690M772.5 655V690M773.5 600V656M774.5 553V601M775.5 515V554M776.5 485V517M777.5 459V486M778.5 438V461M779.5 419V439M780.5 402V421M781.5 388V404M782.5 375V390M783.5 363V377M784.5 353V365M785.5 343V355M786.5 334V345M787.5 326V336M788.5 319V328M789.5 312V321M790.5 306V314M791.5 301V308M792.5 296V303M793.5 291V297M794.5 287V293M795.5 283V289M796.5 279V285M797.5 276V281M798.5 274V278M799.5 271V275M800.5 269V273M801.5 268V271M802.5 266V269M803.5 265V268M804.5 264V267M805.5 264V266M806.5 264V266M807.5 264V266M808.5 264V267M809.5 265V268M810.5 266V269M811.5 268V271M812.5 270V274M813.5 272V276M814.5 274V279M815.5 278V283M816.5 281V287M817.5 285V292M818.5 290V297M819.5 295V303M820.5 301V309M821.5 307V316M822.5 315V324M823.5 322V333M824.5 331V343M825.5 341V353M826.5 352V365M827.5 364V379M828.5 377V394M829.5 392V411M830.5 409V430M831.5 428V452M832.5 451V479M833.5 477V510M834.5 508V549M835.5 547V598M836.5 596V655M837.5 654V691M838.5 654V691M839.5 597V656M840.5 549V599M841.5 511V551M842.5 480V513M843.5 455V482M844.5 433V457M845.5 414V435M846.5 398V416M847.5 383V399M848.5 370V385M849.5 358V372M850.5 348V360M851.5 338V349M852.5 329V340M853.5 321V331M854.5 314V323M855.5 307V316M856.5 301V309M857.5 296V303M858.5 291V298M859.5 286V293M860.5 282V288M861.5 279V284M862.5 275V280M863.5 273V277M864.5 270V274M865.5 268V272M866.5 266V270M867.5 265V268M868.5 264V267M869.5 263V266M870.5 263V265M871.5 263V265M872.5 263V265M873.5 263V266M874.5 264V267M875.5 266V269M876.5 267V271M877.5 269V274M878.5 272V277M879.5 275V280M880.5 278V284M881.5 282V289M882.5 287V294M883.5 292V299M884.5 298V306M885.5 304V313M886.5 311V321M887.5 319V329M888.5 327V339M889.5 337V350M890.5 348V361M891.5 360V375M892.5 373V390M893.5 388V406M894.5 405V426M895.5 424V448M896.5 446V474M897.5 472V506M898.5 504V544M899.5 543V593M900.5 591V650M901.5 648V685M902.5 648V685M903.5 592V650M904.5 544V594M905.5 507V546M906.5 476V508M907.5 450V478M908.5 428V452M909.5 410V430M910.5 393V411M911.5 379V395M912.5 366V380M913.5 354V367M914.5 344V356M915.5 334V345M916.5 325V336M917.5 318V327M918.5 311V319M919.5 304V312M920.5 298V306M921.5 293V300M922.5 288V295M923.5 284V290M924.5 280V286M925.5 277V282M926.5 274V278M927.5 271V275M928.5 269V273M929.5 267V271M930.5 266V269M931.5 265V267M932.5 264V266M933.5 264V266M934.5 264V266M935.5 264V266M936.5 264V267M937.5 265V268M938.5 266V270M939.5 268V272M940.5 270V275M941.5 273V278M942.5 276V281M943.5 280V286M944.5 284V290M945.5 288V295M946.5 294V301M947.5 300V308M948.5 306V315M949.5 313V323M950.5 321V332M951.5 330V342M952.5 340V353M953.5 351V365M954.5 363V379M955.5 377V394M956.5 392V412M957.5 410V432M958.5 430V455M959.5 453V482M960.5 480V515M961.5 513V556M962.5 554V606M963.5 605V662M964.5 660V683M965.5 634V680M966.5 579V635M967.5 535V581M968.5 499V537M969.5 470V501M970.5 445V472M971.5 424V447M972.5 406V426M973.5 390V408M974.5 376V392M975.5 364V378M976.5 352V366M977.5 342V354M978.5 333V344M979.5 325V335M980.5 317V326M981.5 310V319M982.5 304V312M983.5 298V306M984.5 293V300M985.5 288V295M986.5 284V290M987.5 281V286M988.5 277V282M989.5 274V279M990.5 272V276M991.5 270V274M992.5 268V272M993.5 267V270M994.5 266V269M995.5 265V268M996.5 265V267M997.5 265V267M998.5 265V267M999.5 265V268M1000.5 266V269M1001.5 267V271M1002.5 269V273M1003.5 271V275M1004.5 273V278M1005.5 276V281M1006.5 280V285M1007.5 283V289M1008.5 288V294M1009.5 292V299M1010.5 298V305M1011.5 303V312M1012.5 310V319M1013.5 317V327M1014.5 325V336M1015.5 334V346M1016.5 344V356M1017.5 354V368M1018.5 366V382M1019.5 380V397M1020.5 395V413M1021.5 412V433M1022.5 431V455M1023.5 453V481M1024.5 479V512M1025.5 511V551M1026.5 549V599M1027.5 597V656M1028.5 654V690M1029.5 654V690M1030.5 598V656M1031.5 551V600M1032.5 513V552M1033.5 482V514M1034.5 456V484M1035.5 434V458M1036.5 415V436M1037.5 399V417M1038.5 384V401M1039.5 371V386M1040.5 359V373M1041.5 349V361M1042.5 339V351M1043.5 330V341M1044.5 323V332M1045.5 315V324M1046.5 309V317M1047.5 303V310M1048.5 297V304M1049.5 292V299M1050.5 288V294M1051.5 283V289M1052.5 280V285M1053.5 277V282M1054.5 274V278M1055.5 271V275M1056.5 269V273M1057.5 267V271M1058.5 266V269M1059.5 265V268M1060.5 264V267M1061.5 264V266M1062.5 264V265M1063.5 264V266M1064.5 264V266M1065.5 265V268M1066.5 266V269M1067.5 267V271M1068.5 269V273M1069.5 271V276M1070.5 274V279M1071.5 277V282M1072.5 281V286M1073.5 285V291M1074.5 289V296M1075.5 294V302M1076.5 300V308M1077.5 306V315M1078.5 313V322M1079.5 320V330M1080.5 329V340M1081.5 338V350M1082.5 348V361M1083.5 359V374M1084.5 372V388M1085.5 386V404M1086.5 402V422M1087.5 420V442M1088.5 440V466M1089.5 464V495M1090.5 493V529M1091.5 527V572M1092.5 570V625M1093.5 623V678M1094.5 676V688M1095.5 624V678M1096.5 571V626M1097.5 529V573M1098.5 495V531M1099.5 467V497M1100.5 444V469M1101.5 423V445M1102.5 406V425M1103.5 390V407M1104.5 376V392M1105.5 364V378M1106.5 353V366M1107.5 343V354M1108.5 333V344M1109.5 325V335M1110.5 317V327M1111.5 310V319M1112.5 304V312M1113.5 298V306M1114.5 293V300M1115.5 288V295M1116.5 284V290M1117.5 280V286M1118.5 277V282M1119.5 274V279M1120.5 271V276M1121.5 269V273M1122.5 267V271M1123.5 265V269M1124.5 264V267M1125.5 264V266M1126.5 263V265M1127.5 263V265M1128.5 263V265M1129.5 264V266M1130.5 264V267M1131.5 266V269M1132.5 267V271M1133.5 269V274M1134.5 272V277M1135.5 275V280M1136.5 278V284M1137.5 282V289M1138.5 287V294M1139.5 292V300M1140.5 298V306M1141.5 305V314M1142.5 312V322M1143.5 320V331M1144.5 329V341M1145.5 339V352M1146.5 350V365M1147.5 363V379M1148.5 377V395M1149.5 393V413M1150.5 411V433M1151.5 432V458M1152.5 456V486M1153.5 485V521M1154.5 519V564M1155.5 563V618M1156.5 616V672M1157.5 670V682M1158.5 617V672M1159.5 565V619M1160.5 522V566M1161.5 488V524M1162.5 461V490M1163.5 437V462M1164.5 417V439M1165.5 400V419M1166.5 384V401M1167.5 371V386M1168.5 358V372M1169.5 347V360M1170.5 338V349M1171.5 329V339M1172.5 320V330M1173.5 313V322M1174.5 306V315M1175.5 300V308M1176.5 295V302M1177.5 290V297M1178.5 285V292M1179.5 281V287M1180.5 278V283M1181.5 274V279M1182.5 272V276M1183.5 269V274M1184.5 268V271M1185.5 266V269M1186.5 265V268M1187.5 264V267M1188.5 264V266M1189.5 264V265M1190.5 264V266M1191.5 264V267M1192.5 265V268M1193.5 266V270M1194.5 268V272M1195.5 270V274M1196.5 273V277M1197.5 276V281M1198.5 279V285M1199.5 283V290M1200.5 288V295M1201.5 293V301M1202.5 299V308M1203.5 306V315M1204.5 313V323M1205.5 321V332M1206.5 330V342M1207.5 340V353M1208.5 352V366M1209.5 364V380M1210.5 378V396M1211.5 394V414M1212.5 412V435M1213.5 433V459M1214.5 457V488M1215.5 486V523M1216.5 521V566M1217.5 565V621M1218.5 619V677M1219.5 675V688M1220.5 620V677M1221.5 566V622M1222.5 523V568M1223.5 489V525M1224.5 461V491M1225.5 437V463M1226.5 417V439M1227.5 400V419M1228.5 384V401M1229.5 370V386M1230.5 358V372M1231.5 347V360M1232.5 337V349M1233.5 328V339M1234.5 320V330M1235.5 313V322M1236.5 306V315M1237.5 300V308M1238.5 295V302M1239.5 290V297M1240.5 285V292M1241.5 282V287M1242.5 278V283M1243.5 275V280M1244.5 272V277M1245.5 270V274M1246.5 268V272M1247.5 267V270M1248.5 266V269M1249.5 265V268M1250.5 265V267M1251.5 265V266M1252.5 265V267M1253.5 265V268M1254.5 266V269M1255.5 267V270M1256.5 268V272M1257.5 270V274M1258.5 273V277M1259.5 275V280M1260.5 278V284M1261.5 282V288M1262.5 286V292M1263.5 291V297M1264.5 296V303M1265.5 301V309M1266.5 308V316M1267.5 314V324M1268.5 322V332M1269.5 330V341M1270.5 340V352M1271.5 350V363M1272.5 361V375M1273.5 374V390M1274.5 388V405M1275.5 404V423M1276.5 421V444M1277.5 442V468M1278.5 466V496M1279.5 495V531M1280.5 529V574M1281.5 572V628M1282.5 626V681M1283.5 680V692M1284.5 626V682M1285.5 573V628M1286.5 530V575M1287.5 496V532M1288.5 467V497M1289.5 444V469M1290.5 423V445M1291.5 405V425M1292.5 390V407M1293.5 376V392M1294.5 364V378M1295.5 352V365M1296.5 342V354M1297.5 333V344M1298.5 325V335M1299.5 317V326M1300.5 310V319M1301.5 304V312M1302.5 298V306M1303.5 293V300M1304.5 288V295M1305.5 284V290M1306.5 280V286M1307.5 277V282M1308.5 274V279M1309.5 272V276M1310.5 269V273M1311.5 268V271M1312.5 266V269M1313.5 265V268M1314.5 265V267M1315.5 264V266M1316.5 264V266M1317.5 264V266M1318.5 264V267M1319.5 265V268M1320.5 266V270M1321.5 268V271M1322.5 270V274M1323.5 272V276M1324.5 274V279M1325.5 277V283M1326.5 281V286M1327.5 285V291M1328.5 289V296M1329.5 294V301M1330.5 299V307M1331.5 305V313M1332.5 312V320M1333.5 319V328M1334.5 327V337M1335.5 335V347M1336.5 345V357M1337.5 355V369M1338.5 367V382M1339.5 380V396M1340.5 395V413M1341.5 411V431M1342.5 429V453M1343.5 451V478M1344.5 476V507M1345.5 505V543M1346.5 541V588M1347.5 586V642M1348.5 640V685M1349.5 666V688M1350.5 613V668M1351.5 564V615M1352.5 524V565M1353.5 492V526M1354.5 465V494M1355.5 442V467M1356.5 423V444M1357.5 406V425M1358.5 391V407M1359.5 377V392M1360.5 365V379M1361.5 354V367M1362.5 344V356M1363.5 335V346M1364.5 327V337M1365.5 319V329M1366.5 312V321M1367.5 306V314M1368.5 300V308M1369.5 295V302M1370.5 291V297M1371.5 286V292M1372.5 282V288M1373.5 279V284M1374.5 276V281M1375.5 273V278M1376.5 271V275M1377.5 269V273M1378.5 267V271M1379.5 266V269M1380.5 265V268M1381.5 264V267M1382.5 264V266M1383.5 264V266M1384.5 264V266M1385.5 265V267M1386.5 265V268M1387.5 267V270M1388.5 268V272M1389.5 270V274M1390.5 272V277M1391.5 275V280M1392.5 278V284M1393.5 282V288M1394.5 286V292M1395.5 291V297M1396.5 296V303M1397.5 301V309M1398.5 307V316M1399.5 314V324M1400.5 322V332M1401.5 330V341M1402.5 340V352M1403.5 350V363M1404.5 361V376M1405.5 374V390M1406.5 388V406M1407.5 404V423M1408.5 422V444M1409.5 442V468M1410.5 466V496M1411.5 495V531M1412.5 529V573M1413.5 571V625M1414.5 623V675M1415.5 674V685M1416.5 624V676M1417.5 572V625M1418.5 530V574M1419.5 497V532M1420.5 469V498M1421.5 445V470M1422.5 425V447M1423.5 407V427M1424.5 392V409M1425.5 378V393M1426.5 365V380M1427.5 354V367M1428.5 344V356M1429.5 335V346M1430.5 327V337M1431.5 319V328M1432.5 312V321M1433.5 306V314M1434.5 300V308M1435.5 295V302M1436.5 290V297M1437.5 286V292M1438.5 282V288M1439.5 279V284M1440.5 276V280M1441.5 273V277M1442.5 271V275M1443.5 269V272M1444.5 267V271M1445.5 266V269M1446.5 265V268M1447.5 265V267M1448.5 265V267M1449.5 265V267M1450.5 265V268M1451.5 266V269M1452.5 267V270M1453.5 268V272M1454.5 270V274M1455.5 272V277M1456.5 275V280M1457.5 278V283M1458.5 281V287M1459.5 285V292M1460.5 290V297M1461.5 295V302M1462.5 300V308M1463.5 307V315M1464.5 314V323M1465.5 321V331M1466.5 329V341M1467.5 339V351M1468.5 349V362M1469.5 360V375M1470.5 373V389M1471.5 387V405M1472.5 403V423M1473.5 421V444M1474.5 442V468M1475.5 466V496M1476.5 494V531M1477.5 529V574M1478.5 572V627M1479.5 625V680M1480.5 678V690M1481.5 626V680M1482.5 574V628M1483.5 531V575M1484.5 497V533M1485.5 469V499M1486.5 446V471M1487.5 426V448M1488.5 408V427M1489.5 392V410M1490.5 379V394M1491.5 366V380M1492.5 355V368M1493.5 345V357M1494.5 336V347M1495.5 328V338M1496.5 320V329M1497.5 313V322M1498.5 307V315M1499.5 301V309M1500.5 296V303M1501.5 291V298M1502.5 287V293M1503.5 283V288M1504.5 279V285M1505.5 276V281M1506.5 274V278M1507.5 271V275M1508.5 269V273M1509.5 268V271M1510.5 266V269M1511.5 266V268M1512.5 265V267M1513.5 265V267M1514.5 265V267M1515.5 265V267M1516.5 266V268M1517.5 266V270M1518.5 268V271M1519.5 269V273M1520.5 272V276M1521.5 274V279M1522.5 277V282M1523.5 281V286M1524.5 285V291M1525.5 289V296M1526.5 294V301M1527.5 300V308M1528.5 306V315M1529.5 313V322M1530.5 321V331M1531.5 329V340M1532.5 338V351M1533.5 349V362M1534.5 360V375M1535.5 373V389M1536.5 387V405M1537.5 403V423M1538.5 422V444M1539.5 443V469M1540.5 467V498M1541.5 496V533M1542.5 531V576M1543.5 574V630M1544.5 628V683M1545.5 681V693M1546.5 629V683M1547.5 576V631M1548.5 534V578M1549.5 500V536M1550.5 473V502M1551.5 449V474M1552.5 429V451M1553.5 412V431M1554.5 396V413M1555.5 382V398M1556.5 370V384M1557.5 359V372M1558.5 349V361M1559.5 340V351M1560.5 332V342M1561.5 324V333M1562.5 317V326M1563.5 311V319M1564.5 305V312M1565.5 299V306M1566.5 294V301M1567.5 290V296M1568.5 286V292M1569.5 282V288M1570.5 279V284M1571.5 276V281M1572.5 273V278M1573.5 271V275M1574.5 269V273M1575.5 267V271M1576.5 266V269M1577.5 265V268M1578.5 264V267M1579.5 264V266M1580.5 264V266M1581.5 264V266M1582.5 264V267M1583.5 265V268M1584.5 266V269M1585.5 268V271M1586.5 269V273M1587.5 271V276M1588.5 274V279M1589.5 277V282M1590.5 280V286M1591.5 284V290M1592.5 288V295M1593.5 293V300M1594.5 299V306M1595.5 304V313M1596.5 311V320M1597.5 318V328M1598.5 326V337M1599.5 335V346M1600.5 345V357M1601.5 355V369M1602.5 367V382M1603.5 380V397M1604.5 395V413M1605.5 411V432M1606.5 430V454M1607.5 452V479M1608.5 477V509M1609.5 507V545M1610.5 543V591M1611.5 589V645M1612.5 643V689M1613.5 670V692M1614.5 616V672M1615.5 567V618M1616.5 527V569M1617.5 495V529M1618.5 468V497M1619.5 446V470M1620.5 426V448M1621.5 409V428M1622.5 394V411M1623.5 381V396M1624.5 369V383M1625.5 358V370M1626.5 348V360M1627.5 339V350M1628.5 330V341M1629.5 323V332M1630.5 316V325M1631.5 310V318M1632.5 304V311M1633.5 298V306M1634.5 294V300M1635.5 289V295M1636.5 285V291M1637.5 281V287M1638.5 278V283M1639.5 275V280M1640.5 273V277M1641.5 270V274M1642.5 268V272M1643.5 267V270M1644.5 266V269M1645.5 265V267M1646.5 264V266M1647.5 264V266M1648.5 264V265M1649.5 264V266M1650.5 264V266M1651.5 265V267M1652.5 266V269M1653.5 267V271M1654.5 269V273M1655.5 271V275M1656.5 273V278M1657.5 276V281M1658.5 280V285M1659.5 283V289M1660.5 288V294M1661.5 292V299M1662.5 297V305M1663.5 303V311M1664.5 310V318M1665.5 317V326M1666.5 324V334M1667.5 333V344M1668.5 342V354M1669.5 352V366M1670.5 364V378M1671.5 376V392M1672.5 391V408M1673.5 406V426M1674.5 424V447M1675.5 445V471M1676.5 469V499M1677.5 497V534M1678.5 532V576M1679.5 574V628M1680.5 626V678M1681.5 676V687M1682.5 626V678M1683.5 575V628M1684.5 534V577M1685.5 500V535M1686.5 472V502M1687.5 449V474M1688.5 428V450M1689.5 411V430M1690.5 395V413M1691.5 381V397M1692.5 369V383M1693.5 358V371M1694.5 347V359M1695.5 338V349M1696.5 330V340M1697.5 322V332M1698.5 315V324M1699.5 309V317M1700.5 303V310M1701.5 297V305M1702.5 292V299M1703.5 288V294M1704.5 284V290M1705.5 280V286M1706.5 277V282M1707.5 274V279M1708.5 272V276M1709.5 270V274M1710.5 268V272M1711.5 267V270M1712.5 266V269M1713.5 265V267M1714.5 265V267M1715.5 265V266M1716.5 265V267M1717.5 265V268M1718.5 266V269M1719.5 267V270M1720.5 268V272M1721.5 270V274M1722.5 273V277M1723.5 275V280M1724.5 279V284M1725.5 282V288M1726.5 287V293M1727.5 291V299M1728.5 297V305M1729.5 303V311M1730.5 310V319M1731.5 317V327M1732.5 325V336M1733.5 334V346M1734.5 344V357M1735.5 356V370M1736.5 368V384M1737.5 382V400M1738.5 398V418M1739.5 416V438M1740.5 437V463M1741.5 461V491M1742.5 490V526M1743.5 525V570M1744.5 568V625M1745.5 623V681M1746.5 680V693M1747.5 624V682M1748.5 570V626M1749.5 527V571M1750.5 492V528M1751.5 464V494M1752.5 440V466M1753.5 420V442M1754.5 402V422M1755.5 387V404M1756.5 373V389M1757.5 361V375M1758.5 350V362M1759.5 340V351M1760.5 330V341M1761.5 322V332M1762.5 315V324M1763.5 308V317M1764.5 302V310M1765.5 296V304M1766.5 291V298M1767.5 287V293M1768.5 282V288M1769.5 279V284M1770.5 276V281M1771.5 273V277M1772.5 271V275M1773.5 269V272M1774.5 267V270M1775.5 266V269M1776.5 265V268M1777.5 265V267M1778.5 265V266M1779.5 265V267M1780.5 265V268M1781.5 266V269M1782.5 267V271M1783.5 269V273M1784.5 271V275M1785.5 273V278M1786.5 276V282M1787.5 280V286M1788.5 284V290M1789.5 288V295M1790.5 293V301M1791.5 299V307M1792.5 306V314M1793.5 313V322M1794.5 321V331M1795.5 329V341M1796.5 339V352M1797.5 350V365M1798.5 363V378M1799.5 377V394M1800.5 392V412M1801.5 410V433" stroke="#ffff00" stroke-width="1" fill="none"/>
<path d="M293.5 112.5H1801.5V1001.5H293.5Z" stroke="#fff" stroke-width="1" fill="none"/>
<path d="M293 290.5H1802" stroke="#ff0000" stroke-width="1" fill="none"/>
</svg>
<span class="t" style="left:283.55px;top:102.65px;font-size:14px;line-height:19px;color:#fff;transform:scaleX(0.8800);font-weight:bold;">5</span>
<span class="t" style="left:283.55px;top:191.65px;font-size:14px;line-height:19px;color:#fff;transform:scaleX(0.8800);font-weight:bold;">0</span>
<span class="t" style="left:278.87px;top:280.65px;font-size:14px;line-height:19px;color:#fff;transform:scaleX(0.8300);font-weight:bold;">-5</span>
<span class="t" style="left:273.60px;top:369.65px;font-size:14px;line-height:19px;color:#fff;transform:scaleX(0.8300);font-weight:bold;">-10</span>
<span class="t" style="left:273.60px;top:458.65px;font-size:14px;line-height:19px;color:#fff;transform:scaleX(0.8300);font-weight:bold;">-15</span>
<span class="t" style="left:273.60px;top:546.65px;font-size:14px;line-height:19px;color:#fff;transform:scaleX(0.8300);font-weight:bold;">-20</span>
<span class="t" style="left:273.60px;top:635.65px;font-size:14px;line-height:19px;color:#fff;transform:scaleX(0.8300);font-weight:bold;">-25</span>
<span class="t" style="left:273.60px;top:724.65px;font-size:14px;line-height:19px;color:#fff;transform:scaleX(0.8300);font-weight:bold;">-30</span>
<span class="t" style="left:273.60px;top:813.65px;font-size:14px;line-height:19px;color:#fff;transform:scaleX(0.8300);font-weight:bold;">-35</span>
<span class="t" style="left:273.60px;top:902.65px;font-size:14px;line-height:19px;color:#fff;transform:scaleX(0.8300);font-weight:bold;">-40</span>
<span class="t" style="left:273.60px;top:991.65px;font-size:14px;line-height:19px;color:#fff;transform:scaleX(0.8300);font-weight:bold;">-45</span>
<span class="t" style="left:279.32px;top:1007.65px;font-size:14px;line-height:19px;color:#fff;transform:scaleX(0.8850);font-weight:bold;">1549</span>
<span class="t" style="left:425.30px;top:1007.65px;font-size:14px;line-height:19px;color:#fff;transform:scaleX(0.8850);font-weight:bold;">1549.2</span>
<span class="t" style="left:576.45px;top:1007.65px;font-size:14px;line-height:19px;color:#fff;transform:scaleX(0.8850);font-weight:bold;">1549.4</span>
<span class="t" style="left:726.60px;top:1007.65px;font-size:14px;line-height:19px;color:#fff;transform:scaleX(0.8850);font-weight:bold;">1549.6</span>
<span class="t" style="left:877.75px;top:1007.65px;font-size:14px;line-height:19px;color:#fff;transform:scaleX(0.8850);font-weight:bold;">1549.8</span>
<span class="t" style="left:1034.07px;top:1007.65px;font-size:14px;line-height:19px;color:#fff;transform:scaleX(0.8850);font-weight:bold;">1550</span>
<span class="t" style="left:1180.05px;top:1007.65px;font-size:14px;line-height:19px;color:#fff;transform:scaleX(0.8850);font-weight:bold;">1550.2</span>
<span class="t" style="left:1331.20px;top:1007.65px;font-size:14px;line-height:19px;color:#fff;transform:scaleX(0.8850);font-weight:bold;">1550.4</span>
<span class="t" style="left:1481.35px;top:1007.65px;font-size:14px;line-height:19px;color:#fff;transform:scaleX(0.8850);font-weight:bold;">1550.6</span>
<span class="t" style="left:1632.50px;top:1007.65px;font-size:14px;line-height:19px;color:#fff;transform:scaleX(0.8850);font-weight:bold;">1550.8</span>
<span class="t" style="left:1788.82px;top:1007.65px;font-size:14px;line-height:19px;color:#fff;transform:scaleX(0.8850);font-weight:bold;">1551</span>
<span class="t" style="left:282.50px;top:403.65px;font-size:14px;line-height:19px;color:#ffffc8;transform:scaleX(0.8990);font-weight:bold;">5</span>
<span class="t" style="left:251.70px;top:418.65px;font-size:14px;line-height:19px;color:#ffffc8;transform:scaleX(0.9023);font-weight:bold;">dB/div</span>
<span class="t" style="left:787.50px;top:1027.65px;font-size:14px;line-height:19px;color:#ffffc8;transform:scaleX(0.9639);font-weight:bold;">0.2 nm/div</span>
<span class="t" style="left:1345.50px;top:1026.65px;font-size:14px;line-height:19px;color:#ff0000;transform:scaleX(0.9790);font-weight:bold;">Ref.Level: -5</span>
<span class="t" style="left:321.50px;top:78.29px;font-size:13.6px;line-height:18px;color:#ffff00;transform:scaleX(0.9611);">Selected Trace Max. Peak:</span>
<span class="t" style="left:490.50px;top:78.29px;font-size:13.6px;line-height:18px;color:#ffff00;transform:scaleX(0.9597);">Y: -3.4442 dB</span>
<span class="t" style="left:489.70px;top:94.29px;font-size:13.6px;line-height:18px;color:#ffff00;transform:scaleX(0.9374);">X: 1549.1727 nm</span>
<svg id="icons" width="69" height="440" viewBox="1851 0 69 440">
<g fill="none" stroke="#ff0000" stroke-width="4">
<path d="M1880.6 24.9A13 13 0 1 1 1869.4 24.9"/>
<path d="M1875 19V31.8" stroke-width="4.2"/>
</g>
<polygon points="1860.5,65 1889,81 1860.5,97" fill="#000"/>
<polygon points="1861.6,113.0 1883.4,121.8 1876.7,124.0 1888.3,135.6 1884.2,139.7 1872.6,128.1 1870.4,134.8" fill="#000"/>
<rect x="1855" y="153" width="40" height="40" fill="#ff6600"/>
<g fill="none" stroke="#fff" stroke-width="3.6">
<circle cx="1873.9" cy="171.1" r="13.2"/>
<path d="M1867.1 171.1H1880.7M1873.9 164.3V177.9" stroke-width="4"/>
<path d="M1883.4 180.6L1890 187.2" stroke-width="4.6"/>
</g>
<g fill="none" stroke="#000">
<path d="M1875.2 211.7V233.9" stroke-width="2.5"/>
<path d="M1863.9 223H1886.1" stroke-width="2.4"/>
<path d="M1861 232.2C1869.5 232.6 1872 229 1875 223C1878.5 216 1884.5 210.5 1891.2 218.3" stroke-width="2"/>
<circle cx="1873.9" cy="262.8" r="13.2" stroke-width="3.5"/>
<path d="M1867 262.7H1880.2" stroke-width="3.2"/>
<path d="M1883.4 272.4L1890 278.8" stroke-width="4.2"/>
<circle cx="1873.9" cy="308.9" r="13.2" stroke-width="3.5"/>
<path d="M1883.4 318.5L1890 325" stroke-width="4.2"/>
<path d="M1873.8 306.2Q1879.5 297.5 1892.8 302.4" stroke-width="3"/>
<path d="M1858.9 344.7H1891.1M1858.9 369.4H1891.1" stroke-width="3.3"/>
<path d="M1875 352V362" stroke-width="3"/>
<path d="M1883.2 397.3C1882.8 389.3 1893.2 389.6 1893 396.8C1893 401.5 1888 405.5 1882.6 412.3H1894" stroke-width="2.6"/>
<path d="M1869 402.2H1882.4M1872.6 398L1868.6 402.2L1872.6 406.4M1878.6 398L1882.8 402.2L1878.6 406.4" stroke-width="2.2"/>
</g>
<polygon points="1867.6,314.6 1868.2,303 1879,309.4" fill="#000"/>
<polygon points="1857.7,394.4 1862.3,390.8 1864.6,390.8 1864.6,413.7 1861.9,413.7 1861.9,394.3 1859.1,396.6" fill="#000"/>
<polygon points="1875,346.6 1870.5,355.2 1879.5,355.2" fill="#000"/>
<polygon points="1875,367.4 1870.5,358.8 1879.5,358.8" fill="#000"/>
</svg>
</body></html>
